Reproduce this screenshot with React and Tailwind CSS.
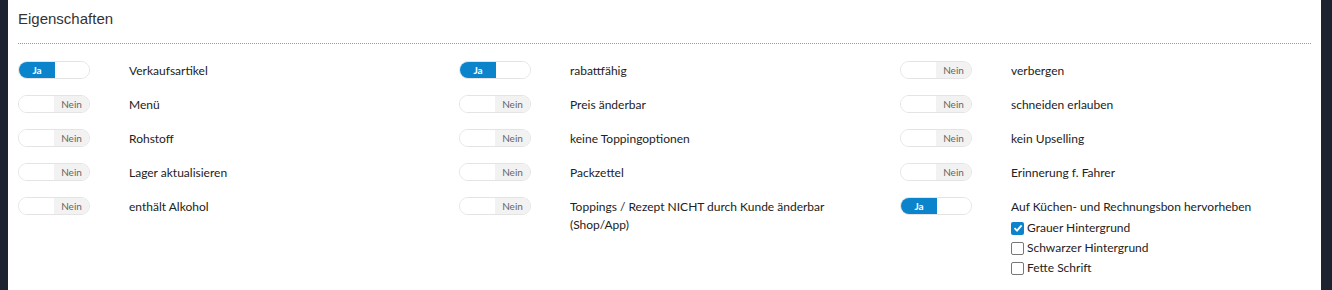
import { useState } from "react";

const COLUMNS = [
  [
    { label: "Verkaufsartikel", on: true },
    { label: "Menü", on: false },
    { label: "Rohstoff", on: false },
    { label: "Lager aktualisieren", on: false },
    { label: "enthält Alkohol", on: false },
  ],
  [
    { label: "rabattfähig", on: true },
    { label: "Preis änderbar", on: false },
    { label: "keine Toppingoptionen", on: false },
    { label: "Packzettel", on: false },
    { label: "Toppings / Rezept NICHT durch Kunde änderbar (Shop/App)", on: false },
  ],
  [
    { label: "verbergen", on: false },
    { label: "schneiden erlauben", on: false },
    { label: "kein Upselling", on: false },
    { label: "Erinnerung f. Fahrer", on: false },
    { label: "Auf Küchen- und Rechnungsbon hervorheben", on: true, extra: true },
  ],
];

function Toggle({ on }) {
  return (
    <div className="flex h-[18px] w-[72px] shrink-0 overflow-hidden rounded-full border border-[#e4e4e4] text-[10px] leading-none">
      {on ? (
        <>
          <div className="flex w-[36px] items-center justify-center bg-[#0b84cc] font-bold text-white">Ja</div>
          <div className="flex-1 bg-white" />
        </>
      ) : (
        <>
          <div className="w-[35px] bg-white" />
          <div className="flex flex-1 items-center justify-center bg-[#f2f2f2] text-[#666]">Nein</div>
        </>
      )}
    </div>
  );
}

function Check({ checked, label }) {
  return (
    <label className="flex h-[20px] items-center gap-[3px]">
      {checked ? (
        <span className="flex h-[13px] w-[13px] items-center justify-center rounded-[2px] bg-[#0b84cc]">
          <svg width="10" height="10" viewBox="0 0 10 10">
            <path d="M1.5 5.2 L4 7.6 L8.6 2.4" fill="none" stroke="white" strokeWidth="1.8" />
          </svg>
        </span>
      ) : (
        <span className="h-[13px] w-[13px] rounded-[2px] border border-[#777] bg-white" />
      )}
      <span>{label}</span>
    </label>
  );
}

export default function App() {
  const [cols] = useState(COLUMNS);
  return (
    <div className="flex h-[290px] w-[1332px] bg-[#1d2230]">
      <div className="w-[8px] shrink-0" />
      <div className="min-w-0 flex-1 bg-white px-[10px]" style={{ fontFamily: "Lato, 'Noto Sans', sans-serif" }}>
        <h3 className="pt-[9px] text-[15px] leading-[20px] text-[#333]" style={{ fontFamily: "'Liberation Sans', Arial, sans-serif" }}>
          Eigenschaften
        </h3>
        <div className="mt-[14px] border-t border-dotted border-[#999]" />
        <div className="mt-[17px] flex text-[12px] text-[#222]">
          {cols.map((col, ci) => (
            <div key={ci} className={`flex flex-col gap-[15px] ${ci < 2 ? "w-[441px] shrink-0" : "min-w-0 flex-1"}`}>
              {col.map((item) => (
                <div key={item.label} className="flex items-start">
                  <Toggle on={item.on} />
                  <div className="ml-[39px] w-[280px] pt-[1px] leading-[18px]">
                    <div>{item.label}</div>
                    {item.extra && (
                      <div className="mt-[2px] flex flex-col">
                        <Check checked label="Grauer Hintergrund" />
                        <Check label="Schwarzer Hintergrund" />
                        <Check label="Fette Schrift" />
                      </div>
                    )}
                  </div>
                </div>
              ))}
            </div>
          ))}
        </div>
      </div>
      <div className="w-[11px] shrink-0" />
    </div>
  );
}
